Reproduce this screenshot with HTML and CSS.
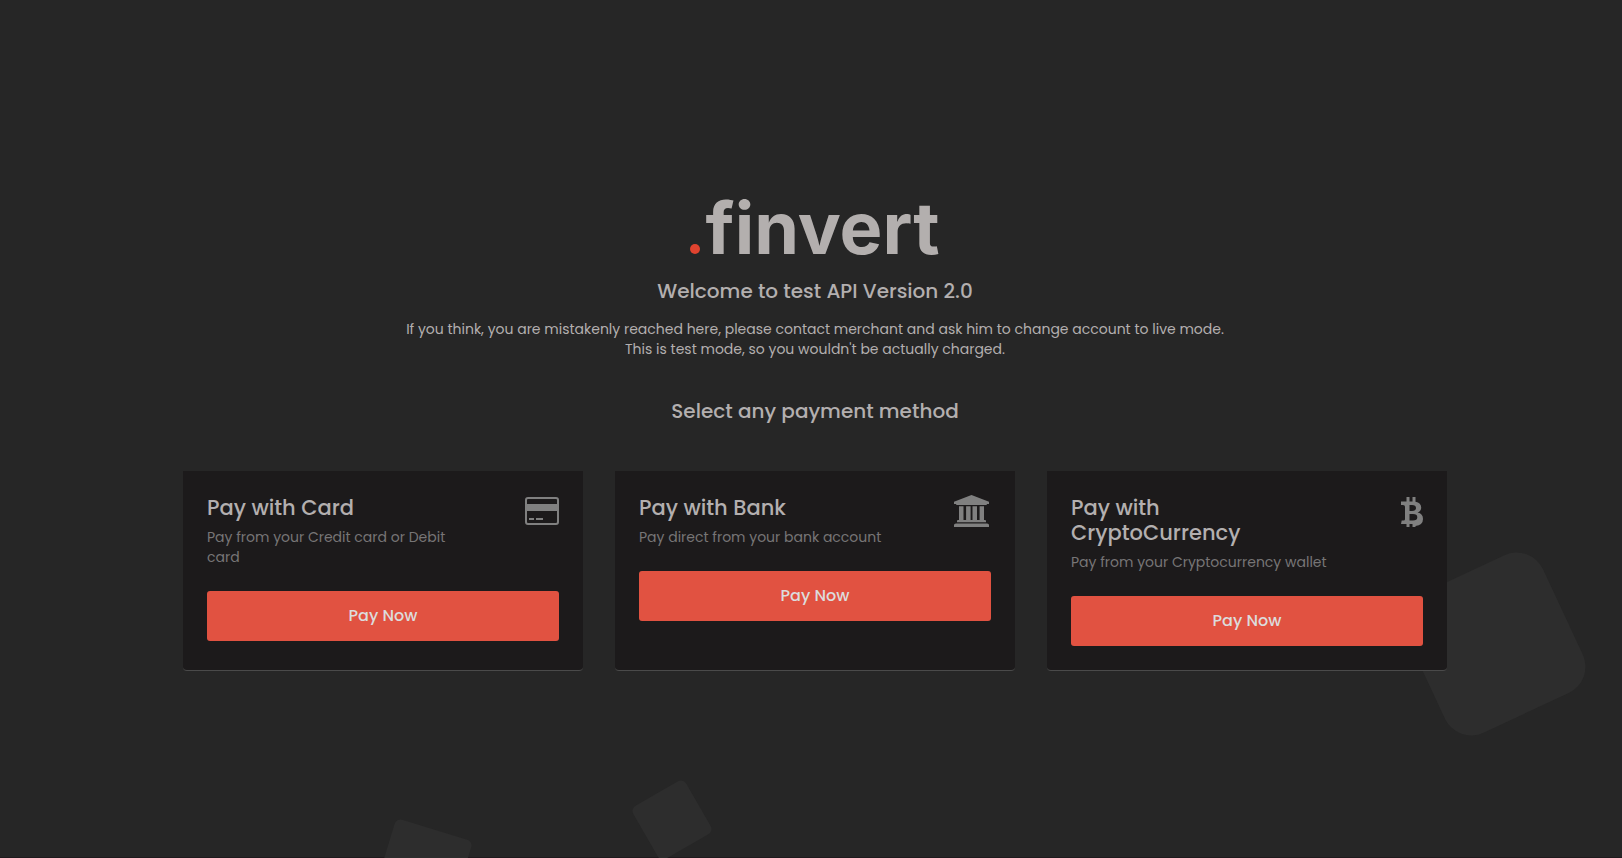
FILE: index.html
```html
<!DOCTYPE html>
<html lang="en">
<head>
<meta charset="utf-8">
<meta name="viewport" content="width=device-width, initial-scale=1">
<title>Finvert</title>
<link rel="stylesheet" href="styles.css">
</head>
<body>
<div class="backdrop" aria-hidden="true">
  <svg class="shape shape-large" viewBox="0 0 184 184"><rect x="16" y="16" width="152" height="152" rx="29" transform="rotate(-25 92 92)"/></svg>
  <svg class="shape shape-medium" viewBox="0 0 100 40"><rect x="10" y="10" width="80" height="80" rx="6" transform="rotate(17 50 50)"/></svg>
  <svg class="shape shape-small" viewBox="0 0 80 78"><rect x="9.500" y="9.500" width="61" height="61" rx="6" transform="rotate(-30 40 40)"/></svg>
</div>
<main class="page">
  <header class="intro">
    <div class="logo"><span class="logo-dot"></span><span>finvert</span></div>
    <h1 class="heading">Welcome to test API Version 2.0</h1>
    <p class="notice">If you think, you are mistakenly reached here, please contact merchant and ask him to change account to live mode.<br>This is test mode, so you wouldn't be actually charged.</p>
    <h2 class="heading">Select any payment method</h2>
  </header>
  <section class="methods">
    <article class="card">
      <div class="card-top">
        <div class="card-text">
          <h3 class="card-title">Pay with Card</h3>
          <p class="card-sub">Pay from your Credit card or Debit card</p>
        </div>
        <svg class="icon" viewBox="0 0 35 35" width="35" height="35" aria-hidden="true"><rect x="2" y="3" width="32" height="26" rx="2" fill="none" stroke="currentColor" stroke-width="2"/><path fill="currentColor" d="M2 9h32v7H2zM5 23h5v2H5zM12 23h7v2h-7z"/></svg>
      </div>
      <button class="pay" type="button">Pay Now</button>
    </article>
    <article class="card">
      <div class="card-top">
        <div class="card-text">
          <h3 class="card-title">Pay with Bank</h3>
          <p class="card-sub">Pay direct from your bank account</p>
        </div>
        <svg class="icon" viewBox="0 0 35 35" width="35" height="35" aria-hidden="true"><path fill="currentColor" d="M-2 6.7L15.500 0L33 6.700V9H31Q31 10 30 10H1Q0 10 0 9H-2zM3 11.200H7.500V25H10.100V11.200H14.600V25H16.500V11.200H21V25H23.600V11.200H28V25H29Q30 25 30 26V27.300H1V26Q1 25 2 25H3zM0 28.500H31Q33 28.500 33 30V32H-2V30Q-2 28.500 0 28.500z"/></svg>
      </div>
      <button class="pay" type="button">Pay Now</button>
    </article>
    <article class="card">
      <div class="card-top">
        <div class="card-text">
          <h3 class="card-title">Pay with CryptoCurrency</h3>
          <p class="card-sub">Pay from your Cryptocurrency wallet</p>
        </div>
        <svg class="icon" viewBox="0 0 35 35" width="35" height="35" aria-hidden="true"><path fill="currentColor" fill-rule="evenodd" d="M18.500 2h3v4.400h3V2h3v4.700q5.700 1 5.700 5.800 0 3.800-3.600 5 5.400 1 5.400 6.500 0 6.200-7.500 6.900V32h-3v-3h-3v3h-3v-3H13l.7-3.500h1.800q1.500 0 1.500-1.300V11.700q0-1.700-2-1.700h-2V6.400h5.500zM21.500 10v6h2.500q4 0 4-3.100 0-2.900-4-2.900zM21.500 19v6.500H25q4.300 0 4.300-3.200 0-3.300-4.300-3.300z"/></svg>
      </div>
      <button class="pay" type="button">Pay Now</button>
    </article>
  </section>
</main>
</body>
</html>
```
FILE: styles.css
```css
* {
  box-sizing: border-box;
}

body {
  position: relative;
  min-height: 100vh;
  margin: 0;
  background: #262626;
  box-shadow: inset 0 -1px #1f1a1d;
  color: #b3afaf;
  font-family: Poppins, Inter, sans-serif;
  font-size: 14px;
  line-height: 20px;
}

h1, h2, h3, p {
  margin: 0;
}

/* Decorative tilted squares behind the content */
.backdrop {
  position: absolute;
  inset: 0;
  overflow: hidden;
}

.shape {
  position: absolute;
  fill: #2d2d2d;
}

.shape-large {
  right: 36px;
  bottom: 122px;
  width: 184px;
}

.shape-medium {
  left: 373px;
  bottom: 0;
  width: 100px;
}

.shape-small {
  left: 632px;
  bottom: 0;
  width: 80px;
}

.page {
  position: relative;
  display: flex;
  flex-direction: column;
  gap: 48px;
  max-width: 1312px;
  min-height: 100vh;
  margin: 0 auto;
  padding: 184px 20px 24px 28px;
}

.intro {
  display: flex;
  flex-direction: column;
  align-items: center;
  text-align: center;
}

.logo {
  display: flex;
  align-items: baseline;
  gap: 5px;
  margin-bottom: 8px;
  color: #b3afae;
  font-family: Inter, sans-serif;
  font-size: 72px;
  font-weight: 700;
  line-height: 87px;
}

.logo-dot {
  width: 10px;
  height: 10px;
  border-radius: 50%;
  background: #e0432f;
}

.heading {
  font-size: 20px;
  font-weight: 500;
  line-height: 24px;
}

.notice {
  margin: 16px 0 40px;
}

.methods {
  display: grid;
  grid-template-columns: repeat(auto-fit, minmax(320px, 1fr));
  gap: 32px;
}

.card {
  padding: 24px;
  background: #1c1a1b;
  border-bottom: 1px solid #4a4a4a;
  border-radius: 0 0 4px 4px;
}

.card-top {
  display: flex;
  justify-content: space-between;
  margin-bottom: 24px;
}

.card-text {
  width: 74%;
}

.card-title {
  margin-bottom: 7px;
  font-size: 21px;
  font-weight: 500;
  line-height: 25px;
}

.card-sub {
  color: #777576;
}

.icon {
  flex: none;
  overflow: visible;
  color: #808080;
}

.pay {
  width: 100%;
  height: 50px;
  border: 0;
  border-radius: 3px;
  background: #e15241;
  color: #dcdcdc;
  font: inherit;
  font-size: 16px;
  font-weight: 500;
  cursor: pointer;
}
```
